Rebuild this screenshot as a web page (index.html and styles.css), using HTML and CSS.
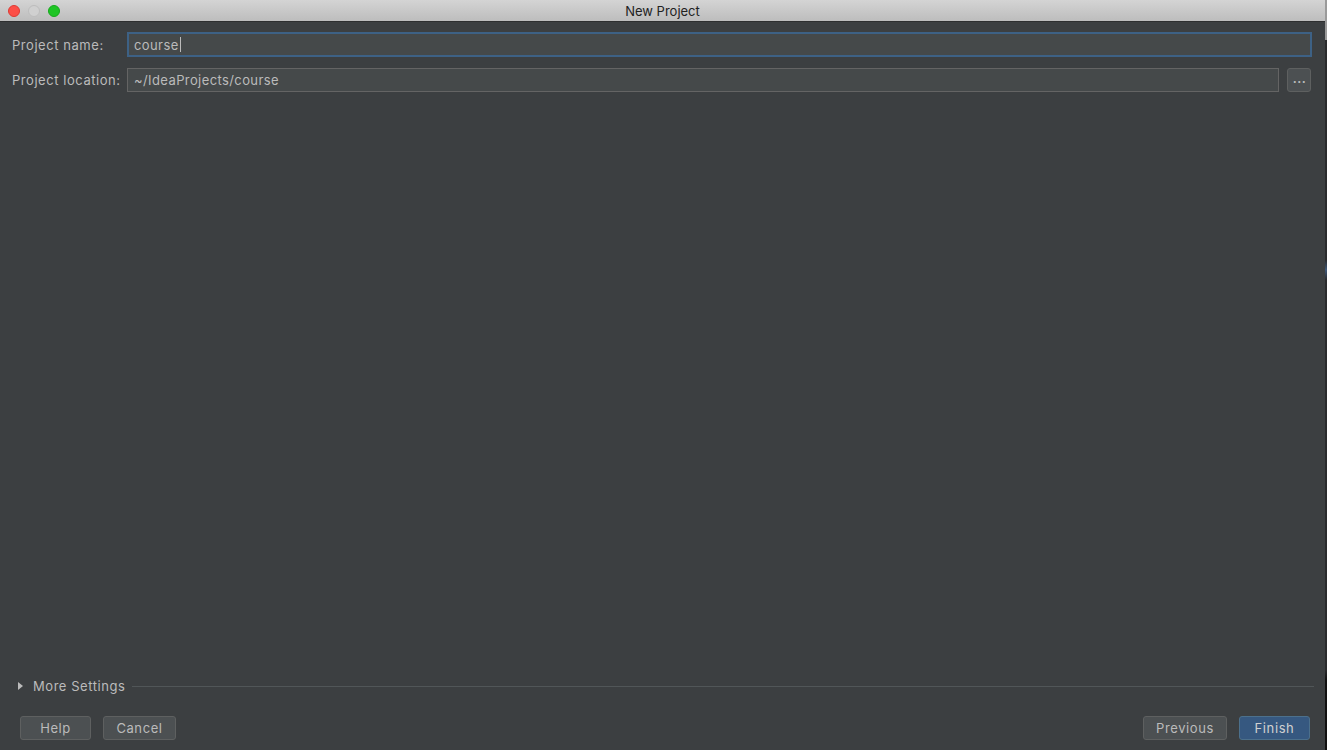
FILE: index.html
```html
<!DOCTYPE html>
<html lang="en">
<head>
  <meta charset="UTF-8">
  <title>New Project</title>
  <link rel="stylesheet" href="styles.css">
</head>
<body>
  <div class="ventana">
    <div class="titulo">
      <div class="semaforo">
        <span class="luz roja"></span>
        <span class="luz gris"></span>
        <span class="luz verde"></span>
      </div>
      <div class="titulo-texto">New Project</div>
    </div>

    <div class="contenido">
      <div class="fila">
        <label class="etiqueta">Project name:</label>
        <div class="campo foco">course<span class="cursor"></span></div>
      </div>
      <div class="fila">
        <label class="etiqueta">Project location:</label>
        <div class="campo">~/IdeaProjects/course</div>
        <button class="btn-puntos">...</button>
      </div>

      <div class="espacio"></div>

      <div class="mas-ajustes">
        <span class="flecha"></span>
        <span>More Settings</span>
        <span class="linea"></span>
      </div>

      <div class="acciones">
        <button class="btn btn-help">Help</button>
        <button class="btn btn-cancel">Cancel</button>
        <div class="relleno"></div>
        <button class="btn btn-previous">Previous</button>
        <button class="btn btn-finish">Finish</button>
      </div>
    </div>
  </div>
  <div class="borde-derecho"></div>
</body>
</html>
```

FILE: styles.css
```css
html, body {
  margin: 0;
  padding: 0;
  height: 100%;
  width: 100%;
  overflow: hidden;
}

body {
  display: flex;
  background: #1f2022;
  font-family: Inter, "Open Sans", sans-serif;
  font-size: 13px;
  color: #bbbbbb;
}

.ventana {
  width: 1325px;
  height: 750px;
  display: flex;
  flex-direction: column;
  background: #3c3f41;
}

.borde-derecho {
  flex: 1;
  background: linear-gradient(to bottom, #9a9a9a 0, #9a9a9a 40px, #2a2b2d 40px, #2a2b2d 260px, #3f5878 270px, #2a2b2d 280px, #2a2b2d 670px, #111 680px);
}

.titulo {
  height: 22px;
  flex-shrink: 0;
  background: linear-gradient(to bottom, #d4d4d4, #bdbdbd);
  border-bottom: 1px solid #2e2f30;
  box-sizing: border-box;
  display: flex;
  align-items: center;
  position: relative;
}

.semaforo {
  display: flex;
  gap: 8px;
  padding-left: 8px;
}

.luz {
  width: 12px;
  height: 12px;
  border-radius: 50%;
  box-sizing: border-box;
}

.roja { background: #fc4f47; border: 1px solid #de3a33; }
.gris { background: #d0d0d0; border: 1px solid #bdbdbd; }
.verde { background: #1ec525; border: 1px solid #15a91b; }

.titulo-texto {
  position: absolute;
  left: 0;
  right: 0;
  text-align: center;
  color: #222;
  font-size: 13px;
  pointer-events: none;
}

.contenido {
  flex: 1;
  display: flex;
  flex-direction: column;
  padding: 10px 13px 10px 12px;
}

.fila {
  display: flex;
  align-items: center;
  height: 25px;
  margin-bottom: 10px;
}

.etiqueta {
  width: 115px;
  letter-spacing: 0.55px;
}

.campo {
  flex: 1;
  height: 24px;
  box-sizing: border-box;
  border: 1px solid #646464;
  background: #45494a;
  padding: 0 6px;
  display: flex;
  align-items: center;
  letter-spacing: 0.4px;
}

.campo.foco {
  border: 2px solid #3d6185;
  padding-left: 5px;
  height: 25px;
}

.cursor {
  display: inline-block;
  width: 1px;
  height: 15px;
  background: #bbbbbb;
  margin-left: 1px;
}

.btn-puntos {
  width: 24px;
  height: 24px;
  margin-left: 8px;
  border: 1px solid #5e6060;
  border-radius: 3px;
  background: #4c5052;
  color: #bbbbbb;
  font-family: inherit;
  font-size: 12px;
  font-weight: bold;
  letter-spacing: 0.5px;
  padding: 0 0 3px 1px;
  margin-right: 1px;
}

.espacio {
  flex: 1;
}

.mas-ajustes {
  display: flex;
  align-items: center;
  gap: 7px;
  padding-left: 6px;
  margin-bottom: 22px;
  letter-spacing: 0.55px;
}

.flecha {
  width: 0;
  height: 0;
  border-top: 4px solid transparent;
  border-bottom: 4px solid transparent;
  border-left: 5px solid #bbbbbb;
  margin-right: 3px;
}

.linea {
  flex: 1;
  height: 1px;
  background: #515658;
  margin-left: 0;
  margin-right: -2px;
}

.acciones {
  display: flex;
  align-items: center;
  gap: 12px;
  padding: 0 0 0 8px;
}

.relleno {
  flex: 1;
}

.btn {
  height: 24px;
  padding: 0;
  border: 1px solid #5e6060;
  border-radius: 3px;
  background: #4c5052;
  color: #bbbbbb;
  font-family: inherit;
  font-size: 13px;
  letter-spacing: 0.6px;
}

.btn-help { width: 71px; }
.btn-cancel { width: 73px; }
.btn-previous { width: 84px; }

.btn-finish {
  width: 71px;
  background: #365880;
  border-color: #4c708c;
  color: #d0d0d0;
  margin-right: 2px;
}
```
